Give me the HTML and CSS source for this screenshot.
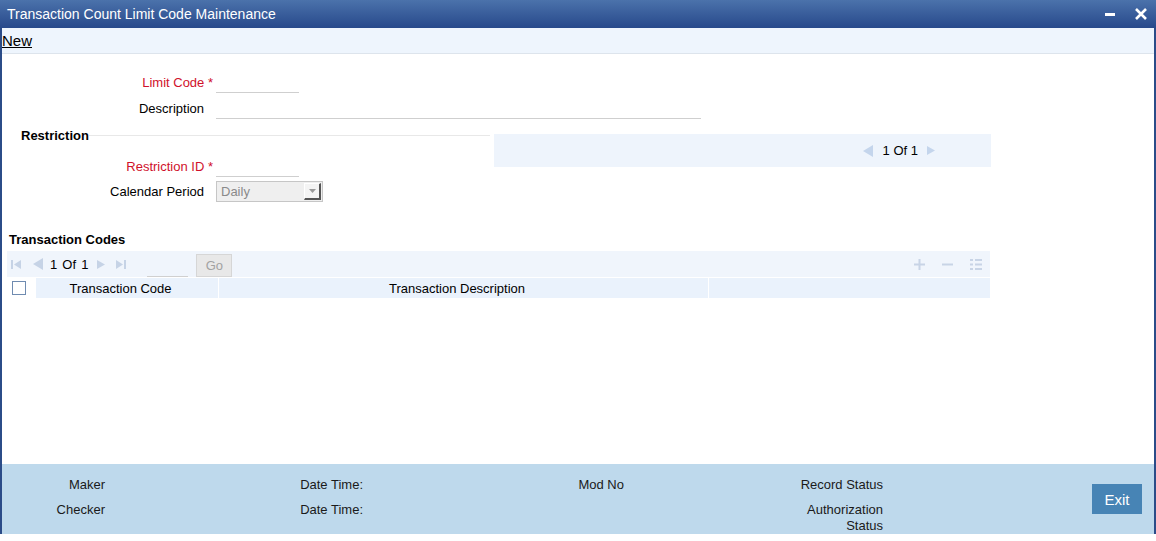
FILE: index.html
```html
<!DOCTYPE html>
<html lang="en">
<head>
  <meta charset="UTF-8" />
  <title>Transaction Count Limit Code Maintenance</title>
  <link rel="stylesheet" href="styles.css">
</head>
<body>
  <div class="window">
    <div class="titlebar">
      <span>Transaction Count Limit Code Maintenance</span>
      <div class="win-btns">
        <svg width="10" height="3" viewBox="0 0 10 3"><rect width="10" height="3" fill="#fff"/></svg>
        <svg width="12" height="12" viewBox="0 0 12 12"><path d="M1 1L11 11M11 1L1 11" stroke="#fff" stroke-width="2.6"/></svg>
      </div>
    </div>

    <div class="frame">
      <div class="toolbar">
        <a href="#">New</a>
      </div>

      <div class="content">
        <div class="fields">
          <div class="form-row">
            <label class="req">Limit Code</label>
            <div class="field short"></div>
          </div>
          <div class="form-row">
            <label>Description</label>
            <div class="field long"></div>
          </div>
        </div>

        <div class="restriction">
          <div class="restr-left">
            <div class="section-title">Restriction</div>
            <div class="form-row restr-id">
              <label class="req">Restriction ID</label>
              <div class="field short"></div>
            </div>
            <div class="form-row cal-row">
              <label>Calendar Period</label>
              <div class="select">
                <span>Daily</span>
                <span class="select-btn">
                  <svg width="7" height="4" viewBox="0 0 7 4"><path d="M0 0H7L3.5 4Z" fill="#9a9a9a"/></svg>
                </span>
              </div>
            </div>
          </div>
          <div class="pager-panel">
            <svg width="10" height="12" viewBox="0 0 10 12"><path d="M10 0V12L0 6Z" fill="#c4d5ec"/></svg>
            <span class="pager-text">1 Of 1</span>
            <svg width="8" height="9" viewBox="0 0 8 9"><path d="M0 0V9L8 4.5Z" fill="#c4d5ec"/></svg>
          </div>
        </div>

        <div class="txn">
          <h2>Transaction Codes</h2>
          <div class="grid-toolbar">
            <svg class="nav first" width="10" height="9" viewBox="0 0 10 9"><rect width="2" height="9" fill="#c6d3e6"/><path d="M10 0V9L3 4.5Z" fill="#c6d3e6"/></svg>
            <svg class="nav prev" width="10" height="12" viewBox="0 0 10 12"><path d="M10 0V12L0 6Z" fill="#c6d3e6"/></svg>
            <span class="page-text">1 Of 1</span>
            <svg class="nav next" width="8" height="9" viewBox="0 0 8 9"><path d="M0 0V9L8 4.5Z" fill="#c6d3e6"/></svg>
            <svg class="nav last" width="10" height="9" viewBox="0 0 10 9"><path d="M0 0V9L7 4.5Z" fill="#c6d3e6"/><rect x="8" width="2" height="9" fill="#c6d3e6"/></svg>
            <span class="page-input"></span>
            <button class="go-btn">Go</button>
            <div class="row-tools">
              <svg width="11" height="11" viewBox="0 0 11 11"><path d="M5.5 0V11M0 5.5H11" stroke="#c8d4e6" stroke-width="2"/></svg>
              <svg width="11" height="11" viewBox="0 0 11 11"><path d="M0 5.5H11" stroke="#c8d4e6" stroke-width="2"/></svg>
              <svg width="12" height="11" viewBox="0 0 12 11"><path d="M0 1H3M5 1H12M0 5.5H3M5 5.5H12M0 10H3M5 10H12" stroke="#c8d4e6" stroke-width="2"/></svg>
            </div>
          </div>
          <div class="grid-head">
            <div class="cell-check"><span class="checkbox"></span></div>
            <div class="cell">Transaction Code</div>
            <div class="cell">Transaction Description</div>
            <div class="cell"></div>
          </div>
        </div>
      </div>

      <div class="footer">
        <div class="audit">
          <span>Maker</span>
          <span>Date Time:</span>
          <span>Mod No</span>
          <span>Record Status</span>
          <span>Checker</span>
          <span>Date Time:</span>
          <span></span>
          <span>Authorization<br>Status</span>
        </div>
        <button class="exit-btn">Exit</button>
      </div>
    </div>
  </div>
</body>
</html>
```

FILE: styles.css
```css
html, body {
  margin: 0;
  padding: 0;
  background: #fff;
  font-family: 'Liberation Sans', Arial, sans-serif;
  font-size: 13px;
  color: #000;
}

body {
  width: 1156px;
  height: 541px;
  overflow: hidden;
}

.window {
  height: 534px;
  display: flex;
  flex-direction: column;
}

.titlebar {
  height: 28px;
  flex: none;
  display: flex;
  align-items: center;
  justify-content: space-between;
  padding: 0 9px 0 7px;
  background: linear-gradient(#4b72ab, #27498b);
  color: #fff;
  font-size: 14px;
}

.win-btns {
  display: flex;
  align-items: center;
  gap: 20px;
}

.frame {
  flex: 1;
  display: flex;
  flex-direction: column;
  border-left: 2px solid #2b4c88;
  border-right: 2px solid #2b4c88;
}

.toolbar {
  height: 25px;
  flex: none;
  display: flex;
  align-items: center;
  background: #eef5fd;
  border-bottom: 1px solid #dde4ec;
  font-size: 15px;
}

.toolbar a {
  color: #000;
  text-decoration: underline;
}

.content {
  flex: 1;
}

.fields {
  padding-top: 18px;
  display: flex;
  flex-direction: column;
  gap: 6px;
}

.form-row {
  display: grid;
  grid-template-columns: 202px auto;
  column-gap: 12px;
  align-items: center;
  height: 20px;
}

.form-row label {
  text-align: right;
}

.req {
  color: #d0112b;
}

.req::after {
  content: " *";
  margin-right: -9px;
}

.field {
  height: 19px;
  border-bottom: 1px solid #cfcfcf;
  margin-top: 1px;
}

.field.short {
  width: 83px;
}

.field.long {
  width: 485px;
}

/* restriction block */
.restriction {
  display: flex;
  margin-top: 10px;
}

.restr-left {
  width: 488px;
}

.section-title {
  display: flex;
  align-items: center;
  height: 14px;
  padding-left: 19px;
  font-weight: bold;
}

.section-title::after {
  content: "";
  flex: 1;
  border-top: 1px solid #e8e8e8;
}

.restr-id {
  margin-top: 14px;
}

.cal-row {
  margin-top: 5px;
}

.select {
  width: 101px;
  height: 19px;
  display: flex;
  align-items: center;
  justify-content: space-between;
  background: #efefef;
  border: 1px solid #c6c6c6;
  color: #8a8a8a;
  padding-left: 4px;
}

.select-btn {
  width: 17px;
  height: 17px;
  display: flex;
  align-items: center;
  justify-content: center;
  background: #f4f4f4;
  border-right: 2px solid #555;
  border-bottom: 2px solid #555;
  border-top: 1px solid #fff;
  border-left: 1px solid #fff;
  box-sizing: border-box;
  margin-right: 1px;
}

.pager-panel {
  margin: 6px 0 0 4px;
  width: 497px;
  height: 33px;
  display: flex;
  align-items: center;
  justify-content: flex-end;
  gap: 10px;
  padding-right: 56px;
  box-sizing: border-box;
  background: #eef4fc;
}

.pager-text {
  margin-right: -1px;
}

/* transaction codes grid */
.txn {
  margin-top: 32px;
}

.txn h2 {
  margin: 0 0 4px 0;
  padding-left: 7px;
  font-size: 13px;
  line-height: 14px;
}

.grid-toolbar {
  margin-left: 5px;
  width: 983px;
  height: 26px;
  display: flex;
  align-items: center;
  background: #f0f5fc;
}

.nav.first {
  margin-left: 4px;
}

.nav.prev {
  margin-left: 12px;
}

.page-text {
  margin-left: 7px;
  word-spacing: 1.5px;
}

.nav.next {
  margin-left: 9px;
}

.nav.last {
  margin-left: 11px;
}

.page-input {
  align-self: flex-end;
  width: 41px;
  height: 1px;
  margin-left: 21px;
  background: #d0d0d0;
}

.go-btn {
  align-self: flex-end;
  margin-left: 8px;
  width: 36px;
  height: 23px;
  padding: 0;
  background: #e8e8e8;
  border: 1px solid #d6d6d6;
  color: #a2a2a2;
  font-family: inherit;
  font-size: 13px;
}

.row-tools {
  margin-left: auto;
  margin-right: 8px;
  display: flex;
  align-items: center;
  gap: 17px;
}

.grid-head {
  margin: 1px 0 0 5px;
  width: 983px;
  height: 20px;
  display: grid;
  grid-template-columns: 28px 183px 490px 1fr;
}

.cell-check {
  display: flex;
  align-items: center;
  padding-left: 5px;
}

.checkbox {
  width: 12px;
  height: 12px;
  border: 1px solid #6f8bb0;
  background: #fff;
}

.cell {
  display: flex;
  align-items: center;
  justify-content: center;
  padding-right: 13px;
  background: #eaf2fc;
  border-left: 1px solid #fff;
}

/* audit footer */
.footer {
  height: 70px;
  flex: none;
  display: flex;
  background: #bed9ec;
}

.audit {
  display: grid;
  grid-template-columns: 103px 258px 261px 259px;
  align-content: start;
  row-gap: 9px;
  padding-top: 13px;
  line-height: 16px;
  text-align: right;
  color: #1a1a1a;
}

.exit-btn {
  margin: 20px 12px 0 auto;
  width: 50px;
  height: 30px;
  padding: 0;
  border: none;
  background: #4784b5;
  color: #fff;
  font-family: inherit;
  font-size: 15px;
}
```
